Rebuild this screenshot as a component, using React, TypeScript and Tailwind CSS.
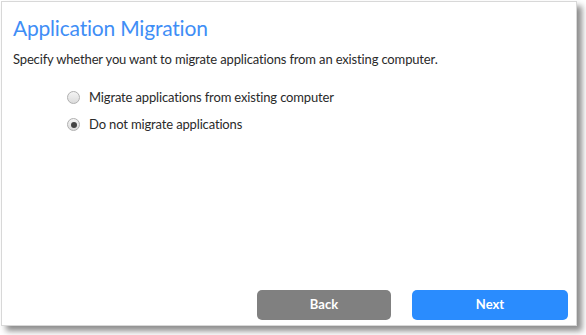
export default function App() {
  return (
    <div className="w-[586px] h-[335px] bg-white pl-px pt-px [font-variant-ligatures:none]" style={{ fontFamily: "Lato, 'Noto Sans', sans-serif" }}>
      <div className="w-[576px] h-[325px] bg-white border border-[#d8d8d8] shadow-[5px_5px_6px_rgba(0,0,0,0.45)] flex flex-col">
        <h1 className="text-[#3f8ef6] text-[21px] leading-none tracking-[-0.2px] pl-[11px] pt-[15px]">Application Migration</h1>
        <p className="text-[#2a2a2a] text-[13px] tracking-[-0.15px] pl-[11px] mt-[12px]">
          Specify whether you want to migrate applications from an existing computer.
        </p>
        <div className="flex flex-col gap-[8px] pl-[65px] mt-[18px] text-[13px] tracking-[-0.15px] text-[#2a2a2a]">
          <label className="flex items-center gap-[9px]">
            <span className="w-[13px] h-[13px] rounded-full border border-[#b0b0b0] bg-gradient-to-b from-[#f4f4f4] to-[#dcdcdc]" />
            Migrate applications from existing computer
          </label>
          <label className="flex items-center gap-[9px]">
            <span className="w-[13px] h-[13px] rounded-full border border-[#b0b0b0] bg-gradient-to-b from-[#f4f4f4] to-[#dcdcdc] flex items-center justify-center">
              <span className="w-[6px] h-[6px] rounded-full bg-[#444]" />
            </span>
            Do not migrate applications
          </label>
        </div>
        <div className="mt-auto mb-[5px] flex justify-end gap-[21px] pr-[8px]">
          <button className="w-[134px] h-[30px] rounded-[5px] bg-[#808080] text-white text-[13px] font-bold">Back</button>
          <button className="w-[156px] h-[30px] rounded-[5px] bg-[#2a8cfe] text-white text-[13px] font-bold">Next</button>
        </div>
      </div>
    </div>
  );
}
